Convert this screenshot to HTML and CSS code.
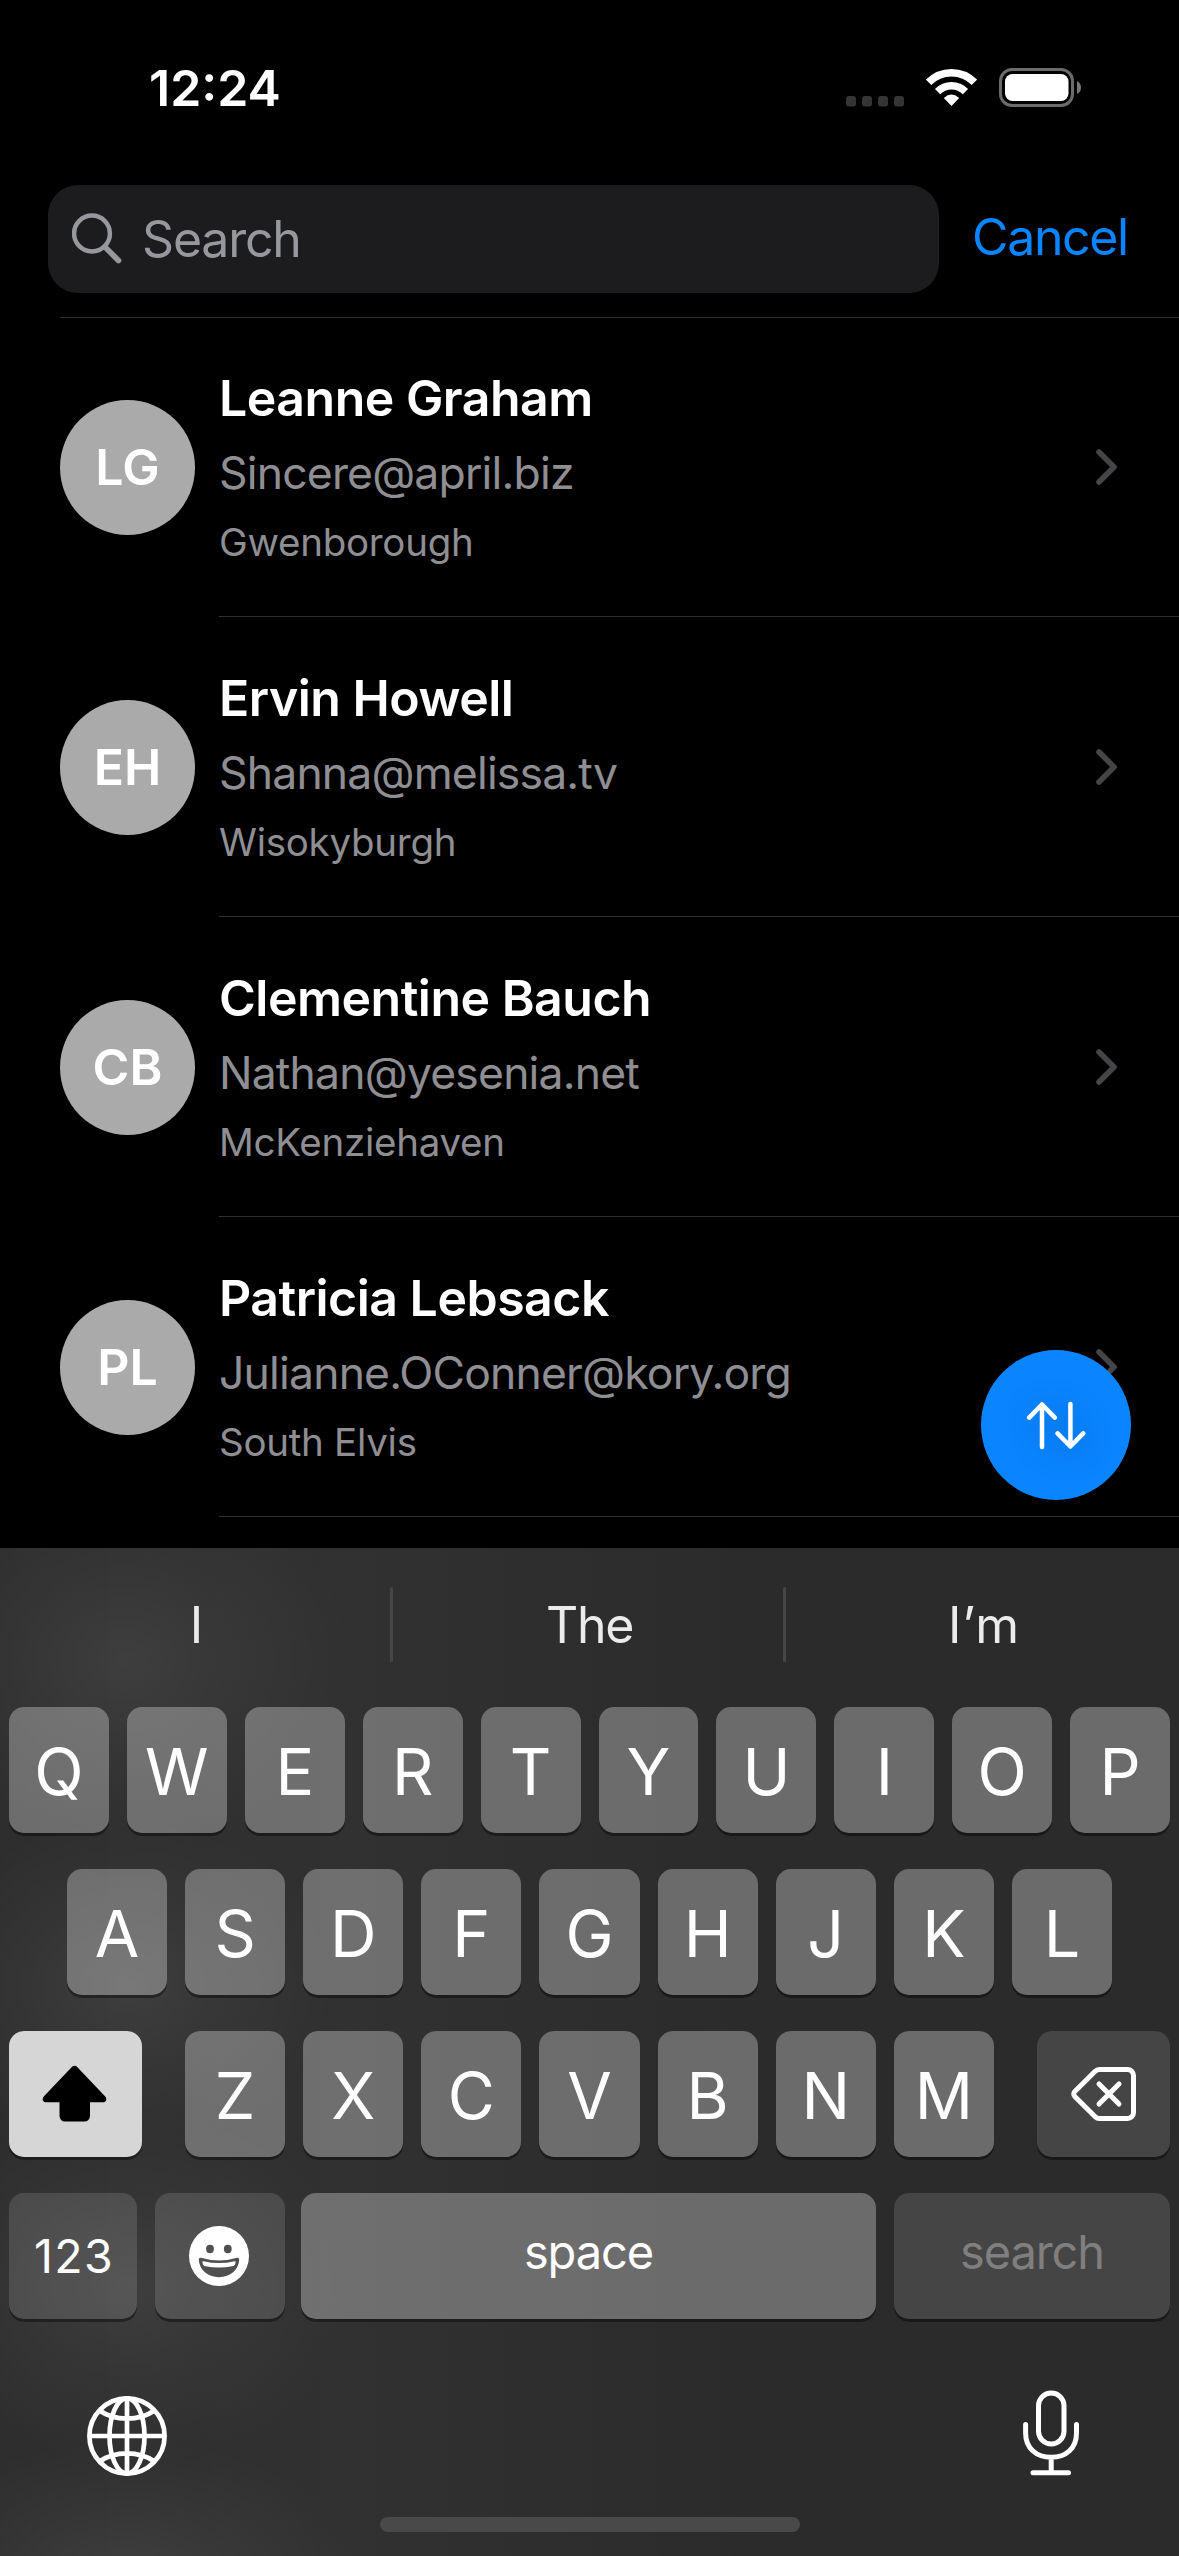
FILE: index.html
```html
<!DOCTYPE html>
<html lang="en">
<head>
<meta charset="utf-8">
<title>Contacts</title>
<link rel="stylesheet" href="styles.css">
</head>
<body>
<div class="screen">
  <header class="status">
    <div class="status-time">12:24</div>
    <div class="status-icons">
      <svg width="58" height="39" viewBox="0 0 58 39" fill="#353535"><rect x="0" y="28" width="10" height="10.5" rx="3"/><rect x="16" y="28" width="10" height="10.5" rx="3"/><rect x="32" y="28" width="10" height="10.5" rx="3"/><rect x="48" y="28" width="10" height="10.5" rx="3"/></svg>
      <svg width="51" height="39" viewBox="0 0 51 39" fill="none" stroke="#fff"><path d="M2.6 14.4A32 32 0 0 1 48.4 14.4" stroke-width="7.6"/><path d="M11.6 23.6A19.5 19.5 0 0 1 39.4 23.6" stroke-width="7.4"/><path d="M25.5 38 18.3 30.6Q17.8 30 18.4 29.4Q21.6 26.6 25.5 26.6T32.6 29.4Q33.2 30 32.7 30.6Z" fill="#fff" stroke="none"/></svg>
      <svg width="82" height="39" viewBox="0 0 82 39"><rect x="1.5" y="1.5" width="72" height="36" rx="11.5" fill="none" stroke="#6b6b6b" stroke-width="3"/><rect x="6" y="6" width="63.5" height="27" rx="7.5" fill="#fff"/><path d="M78 13v13q4-2 4-6.500t-4-6.500z" fill="#777"/></svg>
    </div>
  </header>

  <div class="search-bar">
    <div class="search-field">
      <svg class="search-icon" width="51" height="51" viewBox="0 0 51 51" fill="none" stroke="#97979e" stroke-linecap="round"><circle cx="20" cy="20.500" r="17.900" stroke-width="4.500"/><path d="M33 34 46.500 47.500" stroke-width="5.600"/></svg>
      <span class="search-text">Search</span>
    </div>
    <span class="cancel">Cancel</span>
  </div>

  <main class="list">
    <article class="row">
      <div class="avatar">LG</div>
      <div class="cell">
        <div class="info"><div class="name">Leanne Graham</div><div class="email">Sincere@april.biz</div><div class="city">Gwenborough</div></div>
        <svg class="chevron" viewBox="0 0 22 38"><path d="M4 4 19 19 4 34"/></svg>
      </div>
    </article>
    <article class="row">
      <div class="avatar">EH</div>
      <div class="cell">
        <div class="info"><div class="name">Ervin Howell</div><div class="email">Shanna@melissa.tv</div><div class="city">Wisokyburgh</div></div>
        <svg class="chevron" viewBox="0 0 22 38"><path d="M4 4 19 19 4 34"/></svg>
      </div>
    </article>
    <article class="row">
      <div class="avatar">CB</div>
      <div class="cell">
        <div class="info"><div class="name">Clementine Bauch</div><div class="email">Nathan@yesenia.net</div><div class="city">McKenziehaven</div></div>
        <svg class="chevron" viewBox="0 0 22 38"><path d="M4 4 19 19 4 34"/></svg>
      </div>
    </article>
    <article class="row">
      <div class="avatar">PL</div>
      <div class="cell">
        <div class="info"><div class="name">Patricia Lebsack</div><div class="email">Julianne.OConner@kory.org</div><div class="city">South Elvis</div></div>
        <svg class="chevron" viewBox="0 0 22 38"><path d="M4 4 19 19 4 34"/></svg>
      </div>
    </article>
    <button class="fab" aria-label="Sort">
      <svg width="60" height="50" viewBox="0 0 60 50" fill="none" stroke="#fff" stroke-width="4.500" stroke-linecap="round" stroke-linejoin="round"><path d="M16 47V4.500M3.200 17.600 16 4.500 28.800 17.600M44.400 4V46.500M31.600 33.400 44.400 46.500 57.200 33.400"/></svg>
    </button>
  </main>

  <section class="keyboard">
    <div class="suggestions">
      <span class="suggestion">I</span><i class="divider"></i>
      <span class="suggestion tight">The</span><i class="divider"></i>
      <span class="suggestion loose">I’m</span>
    </div>

    <div class="keys keys-top"><span class="key">Q</span><span class="key">W</span><span class="key">E</span><span class="key">R</span><span class="key">T</span><span class="key">Y</span><span class="key">U</span><span class="key">I</span><span class="key">O</span><span class="key">P</span></div>
    <div class="keys keys-home"><span class="key">A</span><span class="key">S</span><span class="key">D</span><span class="key">F</span><span class="key">G</span><span class="key">H</span><span class="key">J</span><span class="key">K</span><span class="key">L</span></div>
    <div class="keys-bottom">
      <span class="key icon-key shift">
        <svg width="67" height="57" viewBox="0 0 67 57"><path d="M29.600 2.300a4.100 4.100 0 0 1 5.800 0L63 31.300c2.700 2.800 1 6-2.400 6H48V51a5.500 5.500 0 0 1-5.500 5.500H23A5.500 5.500 0 0 1 17.500 51V37.300H4.400c-3.400 0-5.100-3.200-2.400-6z"/></svg>
      </span>
      <div class="keys keys-letters"><span class="key">Z</span><span class="key">X</span><span class="key">C</span><span class="key">V</span><span class="key">B</span><span class="key">N</span><span class="key">M</span></div>
      <span class="key icon-key delete dark">
        <svg width="66" height="56" viewBox="0 0 66 56" fill="none" stroke="#fff" stroke-width="5" stroke-linecap="round"><path d="M29.500 3.500H57.500a6 6 0 0 1 6 6V46.500a6 6 0 0 1-6 6H29.500a6 6 0 0 1-4.300-1.800L4.800 30.600a3.800 3.800 0 0 1 0-5.200L25.200 5.300A6 6 0 0 1 29.500 3.500zM29 18 49 38M49 18 29 38"/></svg>
      </span>
    </div>
    <div class="keys-action">
      <span class="key dark numbers">123</span>
      <span class="key dark icon-key emoji">
        <svg width="60" height="60" viewBox="0 0 60 60"><defs><mask id="face"><rect width="60" height="60" fill="#fff"/><ellipse cx="21" cy="23" rx="3.900" ry="4.200"/><ellipse cx="38.800" cy="23" rx="3.900" ry="4.200"/><path d="M12 31.700Q30 37.300 48 31.700Q50.300 31.300 50.200 33.800C49.500 44 41.500 51.200 30 51.200S10.500 44 9.800 33.800Q9.700 31.300 12 31.700z"/><path d="M14.500 35.200Q30 38.900 45.500 35.200Q47 34.900 46.600 36.400Q46 39.400 44.600 40Q37 41.500 30 41.500T15.400 40Q14 39.400 13.400 36.400Q13 34.900 14.500 35.200z" fill="#fff"/></mask></defs><circle cx="30" cy="30" r="30" fill="#fff" mask="url(#face)"/></svg>
      </span>
      <span class="key space word">space</span>
      <span class="key dark return word">search</span>
    </div>

    <div class="tools">
      <svg width="80" height="80" viewBox="0 0 80 80" fill="none" stroke="#fff" stroke-width="4.700"><circle cx="40" cy="40" r="37.600"/><ellipse cx="40" cy="40" rx="17.500" ry="37.600"/><path d="M40 2V78M2 40H78M12.500 14.500Q24 22.600 40 22.600T67.500 14.500M12.500 65.500Q24 57.400 40 57.400T67.500 65.500"/></svg>
      <svg width="56" height="86" viewBox="0 0 56 86" fill="none" stroke="#fff" stroke-width="5" stroke-linecap="round"><rect x="15.500" y="3" width="25.500" height="51" rx="12.750"/><path d="M2.600 34.500V43C2.600 58 13 67.300 28.200 67.300S53.500 58 53.500 43V34.500M28.200 67.300V82.500M10 82.800H45.500"/></svg>
    </div>
    <div class="home-indicator"></div>
  </section>
</div>
</body>
</html>
```
FILE: styles.css
```css
* {
  box-sizing: border-box;
}

body {
  margin: 0;
  background: #000;
  font-family: Inter, "Liberation Sans", sans-serif;
  color: #fff;
}

svg {
  display: block;
  flex: none;
}

.screen {
  width: 1179px;
  height: 2556px;
  display: flex;
  flex-direction: column;
  overflow: hidden;
  background: #000;
}

/* Status bar */
.status {
  height: 185px;
  display: flex;
  justify-content: space-between;
  align-items: flex-start;
  padding: 58px 98px 0 149px;
}

.status-time {
  font-size: 50px;
  line-height: 60px;
  font-weight: 600;
}

.status-icons {
  display: flex;
  gap: 22px;
  padding-top: 10px;
}

/* Search */
.search-bar {
  height: 132px;
  display: flex;
  align-items: flex-start;
  padding-left: 48px;
}

.search-field {
  width: 891px;
  height: 108px;
  display: flex;
  align-items: flex-start;
  gap: 19px;
  padding: 24px;
  border-radius: 30px;
  background: #1c1c1e;
}

.search-icon {
  margin-top: 4px;
}

.search-text,
.cancel {
  font-size: 50px;
  line-height: 60px;
  letter-spacing: -1.2px;
}

.search-text {
  color: #97979e;
}

.cancel {
  margin: 22px 0 0 33px;
  color: #0a84ff;
  letter-spacing: -1.35px;
}

/* Contact list */
.list {
  position: relative;
  height: 1231px;
}

.list::before {
  content: "";
  display: block;
  height: 1px;
  margin: 0 0 -1px 60px;
  background: #303032;
}

.row {
  height: 300px;
  display: flex;
  gap: 24px;
  padding-left: 60px;
}

.avatar {
  width: 135px;
  height: 135px;
  margin-top: 83px;
  display: flex;
  justify-content: center;
  align-items: center;
  padding-bottom: 1px;
  border-radius: 50%;
  background: #aaa;
  font-size: 50px;
  line-height: 60px;
  font-weight: 600;
}

.cell {
  flex: 1;
  display: flex;
  justify-content: space-between;
  align-items: flex-start;
  padding: 51px 62px 0 0;
  border-bottom: 1px solid #303032;
}

.name {
  font-size: 50px;
  line-height: 60px;
  font-weight: 600;
  letter-spacing: -0.5px;
}

.email {
  margin-top: 18px;
  font-size: 44.5px;
  line-height: 54px;
  letter-spacing: -0.82px;
  color: #8e8e93;
}

.city {
  margin-top: 19px;
  font-size: 38.5px;
  line-height: 46px;
  letter-spacing: -0.27px;
  color: #8e8e93;
}

.chevron {
  width: 22px;
  height: 38px;
  margin-top: 80px;
  fill: none;
  stroke: #454547;
  stroke-width: 5.6px;
  stroke-linecap: round;
  stroke-linejoin: round;
}

.fab {
  position: absolute;
  right: 48px;
  bottom: 48px;
  width: 150px;
  height: 150px;
  display: flex;
  justify-content: center;
  align-items: center;
  padding: 0;
  border: 0;
  border-radius: 50%;
  background: #0a84ff;
}

.fab svg {
  filter: drop-shadow(4px 4px 16px rgba(0, 0, 0, 0.22));
}

/* Keyboard */
.keyboard {
  height: 1008px;
  background:
    radial-gradient(ellipse 230px 190px at 125px 112px, rgba(255, 255, 255, 0.075), rgba(255, 255, 255, 0.032) 50%, transparent),
    radial-gradient(ellipse 210px 170px at 125px 438px, rgba(255, 255, 255, 0.075), rgba(255, 255, 255, 0.032) 50%, transparent),
    radial-gradient(ellipse 230px 180px at 128px 738px, rgba(255, 255, 255, 0.075), rgba(255, 255, 255, 0.032) 50%, transparent),
    radial-gradient(ellipse 240px 140px at 125px 1030px, rgba(255, 255, 255, 0.08), rgba(255, 255, 255, 0.035) 50%, transparent),
    linear-gradient(90deg, rgba(255, 255, 255, 0.01), rgba(255, 255, 255, 0.027) 30%, transparent 65%),
    #2b2b2b;
}

.suggestions {
  height: 159px;
  display: grid;
  grid-template-columns: 390px 3px 390px 3px 1fr;
  padding-top: 39px;
  align-items: start;
}

.suggestion {
  padding: 8px 0 0 3px;
  text-align: center;
  font-size: 50px;
  line-height: 60px;
  color: #ebebeb;
}

.tight {
  letter-spacing: -1.3px;
}

.loose {
  letter-spacing: 1px;
}

.divider {
  height: 75px;
  border-radius: 2px;
  background: #464646;
}

.keys {
  display: flex;
  gap: 18px;
}

.key {
  flex: 1;
  height: 126px;
  display: flex;
  justify-content: center;
  align-items: center;
  padding-top: 4px;
  border-radius: 15px;
  background: rgba(255, 255, 255, 0.3);
  box-shadow: 0 3px 0 rgba(0, 0, 0, 0.4);
  font-size: 64.5px;
  line-height: 78px;
}

.keys-top {
  padding: 0 9px;
}

.keys-home {
  margin-top: 36px;
  padding: 0 67px;
}

.keys-bottom {
  display: flex;
  justify-content: space-between;
  margin-top: 36px;
  padding: 0 9px;
}

.keys-letters {
  width: 809px;
}

.icon-key {
  flex: none;
  width: 133px;
  padding-top: 0;
}

.shift {
  padding-bottom: 1px;
  background: #d6d6d6;
}

.delete {
  padding-right: 1px;
}

.dark {
  background: rgba(255, 255, 255, 0.125);
}

.keys-action {
  display: flex;
  gap: 18px;
  margin-top: 36px;
  padding: 0 9px;
}

.numbers {
  flex: none;
  width: 128px;
  padding: 0 0 0 2px;
  font-size: 46.5px;
  line-height: 56px;
  letter-spacing: 1.3px;
}

.emoji {
  width: 130px;
  padding-right: 2px;
}

.space {
  margin-left: -2px;
}

.word {
  padding: 0 0 9px;
  font-size: 47px;
  line-height: 57px;
  letter-spacing: -1.1px;
}

.return {
  flex: none;
  width: 276px;
  color: #7f7f7f;
}

.tools {
  display: flex;
  justify-content: space-between;
  align-items: flex-end;
  margin-top: 71px;
  padding: 0 100px 0 87px;
}

.home-indicator {
  width: 420px;
  height: 15px;
  margin: 41px auto 0;
  border-radius: 8px;
  background: #494949;
}
```
